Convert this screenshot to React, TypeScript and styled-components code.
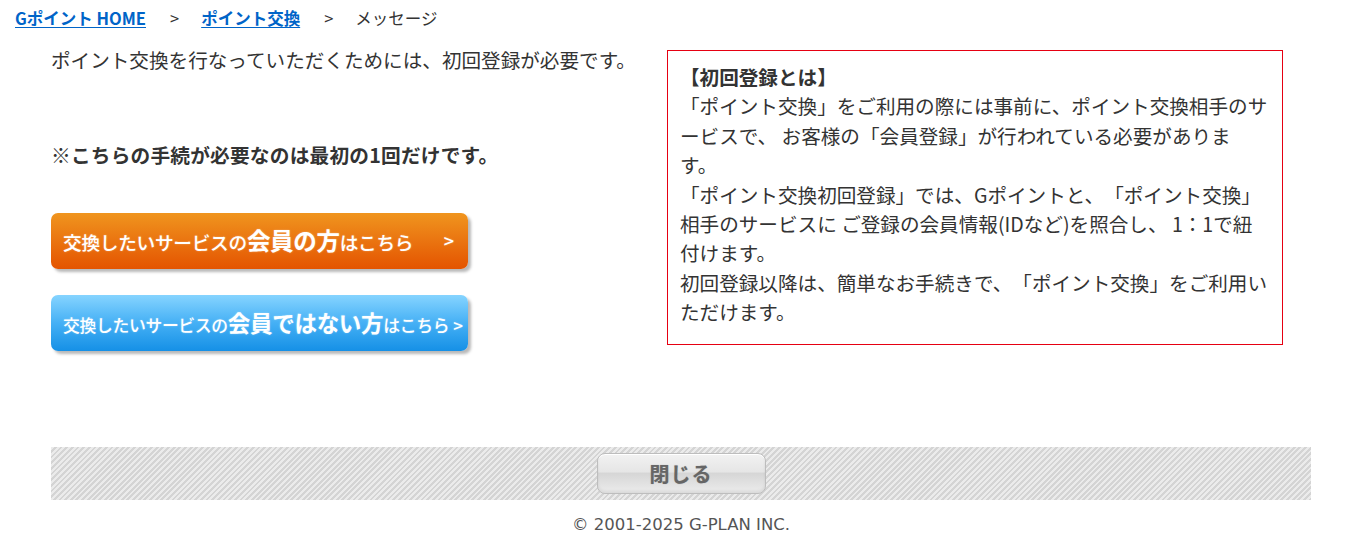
import React from "react";
import styled, { createGlobalStyle } from "styled-components";

const Global = createGlobalStyle`
  html, body { margin: 0; padding: 0; background: #fff; }
  body {
    font-family: "Noto Sans CJK JP", "Noto Sans", sans-serif;
    color: #333;
    text-spacing-trim: space-all;
  }
`;

const Page = styled.div`
  width: 1351px;
`;

const Breadcrumb = styled.nav`
  display: flex;
  align-items: center;
  height: 36px;
  padding-left: 15px;
  font-size: 16.5px;
  color: #333;
`;

const CrumbLink = styled.a`
  color: #0064c8;
  font-weight: bold;
  text-decoration: underline;
  text-underline-offset: 2px;
`;

const Sep = styled.span`
  padding: 0 22px 0 24px;
`;

const Current = styled.span`
  color: #333;
`;

const Main = styled.main`
  width: 1260px;
  margin-left: 51px;
`;

const Columns = styled.div`
  display: flex;
  align-items: flex-start;
`;

const LeftCol = styled.div`
  width: 616px;
  padding-top: 9px;
`;

const Lead = styled.p`
  margin: 0;
  font-size: 19.6px;
  line-height: 30px;
`;

const Note = styled.p`
  margin: 65px 0 0;
  font-size: 19.7px;
  line-height: 30px;
  font-weight: bold;
  letter-spacing: 0.2px;
`;

const ButtonStack = styled.div`
  display: flex;
  flex-direction: column;
  gap: 26px;
  margin-top: 43px;
`;

const CtaButton = styled.a<{ $tone: "orange" | "blue" }>`
  display: flex;
  align-items: center;
  justify-content: space-between;
  box-sizing: border-box;
  width: 417px;
  height: 56px;
  padding: 0 10px 2px 12px;
  border-radius: 7px;
  text-decoration: none;
  color: #fff;
  background: ${(p) =>
    p.$tone === "orange"
      ? "linear-gradient(#f0951e 0%, #ea7410 50%, #e45400 100%)"
      : "linear-gradient(#86d4ff 0%, #45b0f5 50%, #1590e6 100%)"};
  box-shadow: 3px 3px 3px rgba(0, 0, 0, 0.28);
  text-shadow: 0 0 2px rgba(255, 255, 255, 0.35);
  white-space: nowrap;
`;

const Small = styled.span<{ $size: number }>`
  font-size: ${(p) => p.$size}px;
  font-weight: 500;
  letter-spacing: -0.3px;
`;

const Big = styled.span<{ $size: number }>`
  font-size: ${(p) => p.$size}px;
  font-weight: bold;
  letter-spacing: -0.3px;
`;

const Arrow = styled.span<{ $inline?: boolean }>`
  font-size: ${(p) => (p.$inline ? "17px" : "18px")};
  font-weight: 500;
  padding-right: ${(p) => (p.$inline ? "0" : "4px")};
  margin-left: ${(p) => (p.$inline ? "4px" : "0")};
`;

const InfoBox = styled.div`
  box-sizing: border-box;
  width: 616px;
  margin-top: 14px;
  border: 1px solid #e60012;
  padding: 11px 12px 17px 12px;
  font-size: 19.6px;
  line-height: 29.4px;
  color: #333;
`;

const InfoTitle = styled.div`
  font-weight: bold;
`;

const Footer = styled.footer`
  margin-top: 96px;
`;

const StripeBar = styled.div`
  display: flex;
  justify-content: center;
  align-items: center;
  height: 53px;
  background: repeating-linear-gradient(
    -45deg,
    #d4d4d4 0px,
    #d4d4d4 2px,
    #ebebeb 2px,
    #ebebeb 4px
  );
`;

const CloseButton = styled.button`
  box-sizing: border-box;
  width: 169px;
  height: 41px;
  border: 1px solid #bdbdbd;
  border-radius: 8px;
  background: linear-gradient(#f2f2f2 0%, #e6e6e6 45%, #d6d6d6 50%, #ececec 100%);
  box-shadow: inset 0 1px 0 #fff, inset 0 -2px 3px rgba(0, 0, 0, 0.08);
  font-family: "Noto Sans CJK JP", sans-serif;
  font-size: 20px;
  font-weight: bold;
  color: #666;
  letter-spacing: 1px;
  text-shadow: 0 0 1px rgba(0, 0, 0, 0.3);
  cursor: pointer;
`;

const Copyright = styled.p`
  margin: 15px 0 0;
  text-align: center;
  font-family: "DejaVu Sans", "Noto Sans", sans-serif;
  font-size: 16.5px;
  color: #555;
`;

export default function App() {
  return (
    <Page>
      <Global />
      <Breadcrumb>
        <CrumbLink href="#">Gポイント HOME</CrumbLink>
        <Sep>&gt;</Sep>
        <CrumbLink href="#">ポイント交換</CrumbLink>
        <Sep>&gt;</Sep>
        <Current>メッセージ</Current>
      </Breadcrumb>
      <Main>
        <Columns>
          <LeftCol>
            <Lead>ポイント交換を行なっていただくためには、初回登録が必要です。</Lead>
            <Note>※こちらの手続が必要なのは最初の1回だけです。</Note>
            <ButtonStack>
              <CtaButton href="#" $tone="orange">
                <span>
                  <Small $size={18.7}>交換したいサービスの</Small>
                  <Big $size={23.5}>会員の方</Big>
                  <Small $size={18.7}>はこちら</Small>
                </span>
                <Arrow>&gt;</Arrow>
              </CtaButton>
              <CtaButton href="#" $tone="blue">
                <span>
                  <Small $size={16.8}>交換したいサービスの</Small>
                  <Big $size={22.5}>会員ではない方</Big>
                  <Small $size={16.8}>はこちら</Small>
                  <Arrow $inline>&gt;</Arrow>
                </span>
              </CtaButton>
            </ButtonStack>
          </LeftCol>
          <InfoBox>
            <InfoTitle>【初回登録とは】</InfoTitle>
            「ポイント交換」をご利用の際には事前に、ポイント交換相手のサ
            <br />
            ービスで、 お客様の「会員登録」が行われている必要がありま
            <br />
            す。
            <br />
            「ポイント交換初回登録」では、Gポイントと、「ポイント交換」
            <br />
            相手のサービスに ご登録の会員情報(IDなど)を照合し、 1：1で紐
            <br />
            付けます。
            <br />
            初回登録以降は、簡単なお手続きで、「ポイント交換」をご利用い
            <br />
            ただけます。
          </InfoBox>
        </Columns>
        <Footer>
          <StripeBar>
            <CloseButton type="button">閉じる</CloseButton>
          </StripeBar>
          <Copyright>© 2001-2025 G-PLAN INC.</Copyright>
        </Footer>
      </Main>
    </Page>
  );
}
